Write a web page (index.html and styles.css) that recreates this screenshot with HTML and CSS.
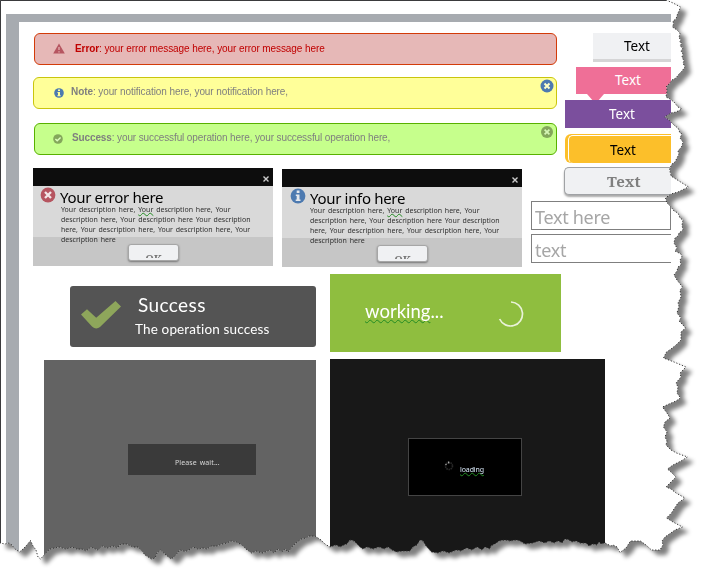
FILE: index.html
```
<!DOCTYPE html>
<html lang="en">
<head>
<meta charset="utf-8">
<title>Message and button styles</title>
<link rel="stylesheet" href="styles.css">
</head>
<body>
<div class="paper">
  <main class="sheet">
    <div class="canvas">
      <div class="upper">
        <section class="messages">
          <div class="alert alert-error">
            <svg class="alert-icon" viewBox="0 0 12 11"><path fill="#b65560" d="M6 .5 11.8 10.5H.2Z"/><path stroke="#e6b8b7" stroke-width="1.2" d="M6 4v3M6 8.3v1.2"/></svg>
            <p><b>Error</b>: your error message here, your error message here</p>
          </div>
          <div class="alert alert-note">
            <svg class="alert-icon" viewBox="0 0 10 10"><circle cx="5" cy="5" r="4.8" fill="#4d7ab0"/><path fill="#ffff99" d="M4 1.6h2v1.5H4zM3.5 4H6v3.2h.7v1H3.4v-1H4V5h-.5z"/></svg>
            <p><b>Note</b>: your notification here, your notification here,</p>
            <svg class="alert-close" viewBox="0 0 14 14"><circle cx="7" cy="7" r="6.5" fill="#4d7ab0"/><path stroke="#ffffc8" stroke-width="2" d="m4.5 4.5 5 5m0-5-5 5"/></svg>
          </div>
          <div class="alert alert-success">
            <svg class="alert-icon" viewBox="0 0 10 10"><circle cx="5" cy="5" r="4.8" fill="#84a75b"/><path fill="none" stroke="#dfffc0" stroke-width="1.4" d="m2.4 5 1.8 1.8 3.4-3.3"/></svg>
            <p><b>Success</b>: your successful operation here, your successful operation here,</p>
            <svg class="alert-close" viewBox="0 0 14 14"><circle cx="7" cy="7" r="6" fill="#84a75b"/><path stroke="#d5f5b5" stroke-width="1.7" d="m4.6 4.6 4.8 4.8m0-4.8-4.8 4.8"/></svg>
          </div>
          <div class="dialogs">
            <article class="dialog">
              <header><svg viewBox="0 0 6 6"><path d="m.5.5 5 5m0-5-5 5"/></svg></header>
              <div class="dialog-body">
                <svg class="dialog-icon" viewBox="0 0 16 16"><circle cx="8" cy="8" r="7.4" fill="#b65560"/><path stroke="#f2e6e7" stroke-width="2.3" d="m5 5 6 6m0-6-6 6"/></svg>
                <div>
                  <h2>Your error here</h2>
                  <p>Your description here, <u>Your</u> description here, Your<br>description here, Your description here Your description<br>here, Your description here, Your description here, Your<br>description here</p>
                </div>
              </div>
              <footer><button class="ok"><span>OK</span></button></footer>
            </article>
            <article class="dialog dialog-info">
              <header><svg viewBox="0 0 6 6"><path d="m.5.5 5 5m0-5-5 5"/></svg></header>
              <div class="dialog-body">
                <svg class="dialog-icon" viewBox="0 0 16 16"><circle cx="8" cy="8" r="7.4" fill="#4d7ab0"/><path fill="#e4e8ed" d="M6.7 2.4h2.8V5H6.7zM5.8 6.4h3.7v5h1V13H5.7v-1.6h1V8h-.9z"/></svg>
                <div>
                  <h2>Your info here</h2>
                  <p>Your description here, <u>Your</u> description here, Your<br>description here, Your description here Your description<br>here, Your description here, Your description here, Your<br>description here</p>
                </div>
              </div>
              <footer><button class="ok"><span>OK</span></button></footer>
            </article>
          </div>
        </section>
        <aside class="controls">
          <div class="btn btn-flat">Text</div>
          <div class="btn btn-pink">Text</div>
          <div class="btn btn-purple">Text</div>
          <div class="btn btn-amber"><span>Text</span></div>
          <div class="btn btn-serif">Text</div>
          <div class="field">Text here</div>
          <div class="field field-open">text</div>
        </aside>
      </div>
      <div class="lower">
        <section class="col-wait">
          <div class="toast">
            <svg class="toast-check" viewBox="0 0 42 30"><path fill="#8ea65b" d="m1 14.5 6-5.3 9.2 8.6L35.500 1l5.500 5.600L20 27q-4 3-8-.5z"/></svg>
            <div><h3>Success</h3><p>The operation success</p></div>
          </div>
          <div class="panel panel-gray"><div class="wait">Please wait...</div></div>
        </section>
        <section class="col-work">
          <div class="working">
            <p><u>working</u>...</p>
            <svg viewBox="0 0 28 28"><path fill="none" stroke="#e9f2d8" stroke-width="1.7" d="M14 2A12 12 0 1 1 2.600 19"/></svg>
          </div>
          <div class="panel panel-black">
            <div class="loading">
              <svg viewBox="0 0 10 10"><circle cx="5" cy="5" r="3.500" fill="none" stroke="#282828" stroke-width="1.600" stroke-dasharray="1.500 .7"/><path stroke="#aaa" stroke-width="1.300" d="m4.500.500.3 2M1.500 3l1 .8"/></svg>
              <u>loading</u>
            </div>
          </div>
        </section>
      </div>
    </div>
  </main>
  <svg class="edge" width="701" height="569" viewBox="0 0 701 569">
    <defs>
      <path id="outline" d="M0 0H666L673 3 680.500 7 679 11 677.500 14 676 19 673 21 673.500 24 672.500 27 677 30 680 33 679 38 681 40 679.500 42 682 43 680 46 683 48 681 51 683 54 682 57 684 61 683 63 685 67 682 71 679 74 676 78 672 80 669 84 666.500 86 667 91 666 97 670 99 674 102 678 107 682 109 676 112 671 113 664.500 117 669 120 675 126 678 128 680 133 682 134 680 138 683 142 681.500 147 678 151 679 154 675 162 672 164 669.500 169 671 176 679 181 688.500 187 678 192 671 194 665.500 198 667 203 671 207 674 211 678 213 680 218 683 220 682 225 683 230 679 233 678 236 675 238 674 243 677 248 675 251 681 254 682 257 680 260 681 265 678 267 677 271 674 275 677 280 682.500 287 680 290 681 297 678 303 679 306 677 313 681 318 679 321 683 325 685.500 328 681 332 681 340 676 345 671 349 666.500 352 663.500 358 674 362 686 367 680 373 681 377 676 383 678 387 677 393 680.500 398 676 401 669 404 662.500 407 667 413 670 418 665 422 663.500 427 667 432 665 437 667 441 666 445 671 450 676.500 453 687.500 457 681 461 673 465 667.500 469 672 473 676 477 671 482 666 487 671 489 676 493 685 498 678 503 674 509 671.500 513 666.500 518 673 522 682.500 527 675 530 665 537 662 541 663 545 660 550 651.500 550 646 545 640.500 541 630.500 541 626 548 620 552.500 617 547 613 545 611 546 605 543 601 544 599 542 597 545 593 544 589 546 586 543 580 543 576 541 572 542 569 540 565 539 562 543 558 541 554 543 549 541 545 543 539 541 533 543 525 544 520 541 516.500 540 510 541 505 540 499 541 496.500 543 491 546 490 549 485 547 482 550 477 547 472 550 466.500 548 461 551 456.500 550 449 553 443 551 438 553 431.500 552 426 546 423 541 420 540 417 545 413 547 410 551 403 551 396.500 552 392 550 388 547 384 549 379 547 373 549 367 547 363 549 360 547 357 544 354 541 350 540 347 544 344 545 340 547 336 545 330 547 325 544 321 540 315 536 309 536 306 538 301.500 539 296 543 292 547 288 552 285 549 282 552 278 549 274 553 270 550 265 552 262 553 256 551 251.500 553 246 549 242 545 236.500 542 231 541 227 543 222 544 217 546 211 546 207 549 203 548 198 549 193 547 189 550 185 551.500 180 550 174 557 171 559 166 555 160.500 550 157 553 155 558 151.500 559 145 555 142 551 138 547 133 547 126.500 544 121 544 117 548 113 546 107 548 102 546 98 550 91 547 86 551 82 549 77 549 72 547 66 549 59 547 50 549 45 554 40.500 559 38 557 36 550 33 546 30.500 540.500 26 546 23 549 19.500 552 15 549 12 545 9 543 5 544 0 543Z"/>
      <clipPath id="torn"><use href="#outline"/></clipPath>
    </defs>
    <use class="edge-line" href="#outline"/>
    <path class="edge-frame" d="M.5 543V.5H666"/>
  </svg>
</div>
</body>
</html>
```
FILE: styles.css
```
* { box-sizing: border-box; }
body { margin: 0; background: #fff; overflow: hidden; font-family: "Noto Sans", sans-serif; }
h2, h3, p { margin: 0; font-weight: 400; }
svg { display: block; flex: none; }

.paper { position: relative; width: 701px; height: 569px; overflow: hidden; filter: drop-shadow(6px 5px 2px #808080); }
.sheet { width: 701px; height: 569px; padding: 14px 0 0 6px; background: #fff; clip-path: url(#torn); }
.canvas { width: 665px; height: 555px; border: solid #a7abb0; border-width: 8px 0 0 13px; overflow: hidden; }
.edge { position: absolute; inset: 0; }
.edge-line { fill: none; stroke: #333; stroke-width: 1; stroke-dasharray: 1.200 1.800; }
.edge-frame { fill: none; stroke: #3a3a3c; }

.upper { display: flex; justify-content: space-between; height: 252px; padding: 11px 0 0 14px; }
.messages { width: 489px; }
.alert { position: relative; display: flex; align-items: center; width: 524px; height: 32px; margin-bottom: 12px; padding-left: 19px; border: 1px solid; border-radius: 6px; font: 10px "Liberation Sans", sans-serif; letter-spacing: -.09px; color: #7f7f7f; white-space: nowrap; }
.alert-icon { width: 10px; height: 10px; }
.alert p { margin-left: 8px; }
.alert-error { width: 523px; margin-left: 1px; padding-left: 18px; border-color: #d33b09; background: #e6b8b7; color: #c00000; }
.alert-error .alert-icon { width: 12px; height: 11px; margin-top: -2px; }
.alert-error p { margin-top: -2px; margin-left: 10px; }
.alert-note { margin-bottom: 14px; padding-left: 20px; border-color: #c9c50d; background: #ffff99; }
.alert-note p { margin-top: -3px; margin-left: 7px; }
.alert-success { width: 523px; margin: 0 0 13px 1px; padding-left: 18px; border-color: #58b100; background: #c6ff8c; letter-spacing: -.12px; }
.alert-success p { margin-top: -3px; margin-left: 9px; }
.alert-close { position: absolute; top: 1px; right: 2px; width: 14px; height: 14px; }

.dialogs { display: flex; gap: 9px; }
.dialog { width: 240px; height: 98px; background: #d9d9d9; }
.dialog-info { margin-top: 1px; }
.dialog header { display: flex; justify-content: flex-end; align-items: center; height: 18px; padding: 3px 4px 0 0; background: #0d0d0d; }
.dialog header svg { width: 6px; height: 6px; stroke: #ccc; stroke-width: 1.400; }
.dialog-body { position: relative; display: flex; height: 51px; padding-left: 7px; }
.dialog-icon { width: 16px; height: 16px; margin-top: 1px; }
.dialog-info .dialog-icon { margin-left: 1px; }
.dialog-body > div { margin-left: 4px; white-space: nowrap; }
.dialog-info .dialog-body > div { margin-left: 3px; }
.dialog h2 { height: 19px; font-size: 15px; line-height: 23px; letter-spacing: -.32px; color: #000; }
.dialog p { margin-left: 1px; font-size: 7px; line-height: 10px; word-spacing: 1px; color: #303030; }
.dialog-info h2, .dialog-info p { margin-left: 1px; }
u { text-decoration: underline wavy #228b22 1px; text-underline-offset: 1px; text-decoration-skip-ink: none; }
.dialog u, .loading u { text-decoration-thickness: .5px; text-underline-offset: 0; }
.dialog footer { height: 29px; padding: 7px 0 0 95px; background: #c6c6c6; }
.ok { display: block; width: 51px; height: 17px; padding: 6px 0 0; border: 1px solid #a6a6a6; border-radius: 3px; background: #f0f1f3; box-shadow: 0 1px 2px #777; }
.ok span { display: block; height: 4px; overflow: hidden; font: bold 11px/9px "Noto Serif", "Liberation Serif", serif; color: #777; }

.controls { display: flex; flex-direction: column; align-items: flex-end; width: 140px; white-space: nowrap; }
.btn { font-size: 13.500px; line-height: 27px; }
.btn-flat { width: 78px; height: 29px; padding-left: 31px; border-bottom: 3px solid #d5d5d6; background: #f0f1f3; color: #000; }
.btn-pink { position: relative; width: 95px; height: 27px; margin-top: 5px; padding-left: 39px; background: #ef6f97; color: #fff; }
.btn-pink::after { content: ""; position: absolute; top: 27px; left: 11px; width: 17px; height: 6px; background: #ef6f97; clip-path: polygon(0 0, 100% 0, 69% 100%, 31% 100%); }
.btn-purple { width: 106px; height: 28px; margin-top: 6px; padding-left: 44px; background: #7b4f9d; color: #fff; line-height: 28px; }
.btn-amber { width: 106px; height: 29px; margin-top: 6px; padding: 1px 0 0 3px; border-radius: 6px 0 0 6px; background: #fcbf2a; color: #000; line-height: 29px; }
.btn-amber span { display: block; height: 28px; padding-left: 41px; border: solid #fff; border-width: 1px 0 0 1px; border-radius: 5px 0 0 5px; }
.btn-serif { width: 107px; height: 28px; margin-top: 4px; padding-left: 42px; border: solid #a0a2a5; border-width: 1px 0 1px 1px; border-radius: 5px 0 0 5px; background: #f0f1f3; box-shadow: 0 2px 2px #aaa; font: bold 15px/27px "Noto Serif", "DejaVu Serif", "Liberation Serif", serif; color: #7f7f7f; }
.field { width: 140px; height: 29px; margin-top: 6px; padding-left: 3px; border: 1px solid #7f7f7f; background: #fff; font-size: 18px; line-height: 30px; letter-spacing: -.3px; color: #a6a6a6; }
.field-open { margin-top: 4px; border-right: 0; }

.lower { display: flex; gap: 14px; padding-left: 25px; }
.col-wait { display: flex; flex-direction: column; align-items: flex-end; width: 272px; padding-top: 12px; }
.toast { display: flex; width: 246px; height: 61px; padding: 14px 0 0 11px; border-radius: 3px; background: #545454; color: #fff; font-family: Lato, sans-serif; }
.toast-check { width: 42px; height: 30px; margin-left: -1px; }
.toast h3 { margin: -6px 0 0 16px; font-size: 19px; line-height: 22px; letter-spacing: .4px; }
.toast p { margin: 4px 0 0 13px; font-size: 13.500px; line-height: 18px; letter-spacing: .15px; }
.panel { display: flex; }
.panel-gray { width: 272px; height: 209px; margin-top: 13px; padding: 84px 0 0 84px; background: #636363; }
.wait { width: 128px; height: 31px; padding-left: 47px; background: #3a3a3a; font-size: 7px; line-height: 37px; letter-spacing: .1px; word-spacing: 1px; color: #d9d9d9; }
.working { display: flex; width: 231px; height: 78px; padding: 25px 0 0 35px; background: #8fbe3f; color: #fff; font: 18.500px/24px Lato, sans-serif; }
.working p { width: 132px; }
.working svg { width: 28px; height: 28px; margin-top: 1px; }
.panel-black { width: 275px; height: 210px; margin-top: 7px; padding: 79px 0 0 78px; background: #181818; }
.loading { display: flex; gap: 6px; width: 114px; height: 58px; padding: 22px 0 0 35px; border: 1px solid #444; background: #000; color: #d8e8f8; font: 7px/17px "Noto Sans", sans-serif; letter-spacing: -.1px; }
.loading svg { width: 10px; height: 10px; }
```
